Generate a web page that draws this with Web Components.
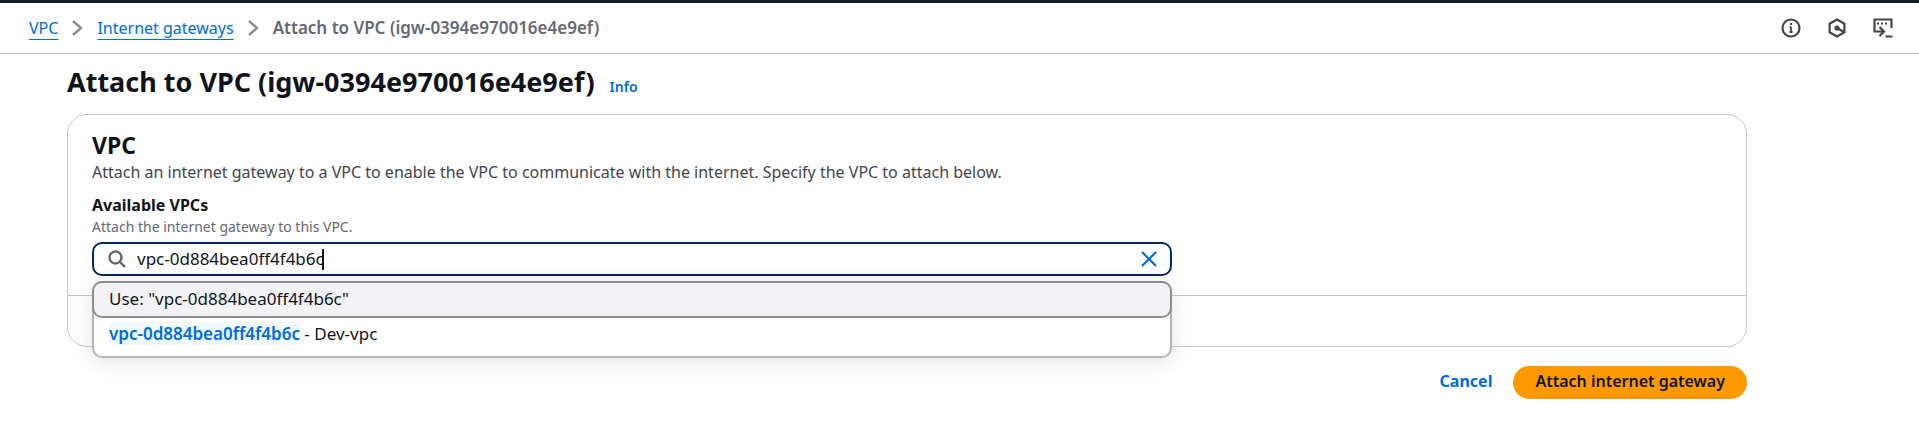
<!DOCTYPE html>
<html lang="en">
<head>
<meta charset="utf-8">
<meta name="viewport" content="width=device-width, initial-scale=1">
<title>Attach to VPC</title>
<style>
  :root {
    --link: #006ce0;
    --ink: #0f141a;
    --muted: #656871;
    --body: #424650;
    --line: #c6c6cd;
    --id-text: 17px;
    --small: 14px;
  }
  body {
    margin: 0;
    background: #fff;
    color: var(--ink);
    font: 16px/24px "Noto Sans", "Open Sans", sans-serif;
  }
</style>
</head>
<body>
<vpc-app></vpc-app>

<script>
const define = (name, html, setup) => {
  const template = document.createElement('template');
  template.innerHTML = html;
  customElements.define(name, class extends HTMLElement {
    constructor() {
      super();
      this.attachShadow({ mode: 'open' }).append(template.content.cloneNode(true));
    }
    connectedCallback() { if (setup) setup(this.shadowRoot, this); }
  });
};

define('crumb-trail', `
<style>
  :host { display: block; }
  ol { display: flex; align-items: center; gap: 14px; margin: 0; padding: 0; list-style: none; }
  li { display: flex; align-items: center; gap: 14px; }
  a { color: var(--link); text-decoration: underline; text-decoration-thickness: 1px; text-underline-offset: 5px; }
  b { color: var(--muted); font-size: var(--id-text); font-weight: 600; }
  svg { display: block; fill: none; stroke: #8c8c94; stroke-width: 2.4; }
</style>
<nav aria-label="Breadcrumbs"><ol>
  <li><a href="#vpc">VPC</a><svg width="11" height="16" viewBox="0 0 11 16"><path d="M1 1l8 7-8 7"/></svg></li>
  <li><a href="#gateways">Internet gateways</a><svg width="11" height="16" viewBox="0 0 11 16"><path d="M1 1l8 7-8 7"/></svg></li>
  <li><b aria-current="page">Attach to VPC (igw-0394e970016e4e9ef)</b></li>
</ol></nav>`);

define('panel-tools', `
<style>
  :host { display: flex; align-items: center; gap: 26px; }
  button { display: block; padding: 0; border: 0; background: none; }
  svg { display: block; fill: none; stroke: #424650; stroke-width: 2.2; }
  .solid { fill: #424650; stroke: none; }
</style>
<button aria-label="Information"><svg width="20" height="20" viewBox="0 0 20 20"><circle cx="10" cy="10" r="8.5"/><path d="M10 9v5M8.6 9H10M8.4 14h3.2" stroke-width="1.8"/><rect class="solid" x="9" y="5" width="2" height="2"/></svg></button>
<button aria-label="Resources"><svg width="20" height="20" viewBox="0 0 20 20"><path d="M10 1.5l7.4 4.2v8.6L10 18.5l-7.4-4.2V5.7z"/><circle class="solid" cx="10" cy="10" r="2.6"/><path d="M10 10l7 4"/></svg></button>
<button aria-label="CloudShell"><svg width="20" height="20" viewBox="0 0 20 20"><path d="M1.5 14.5V1.5h17V10M.5 13.5H11M6.5 9L11 13.5 6.5 18M12.5 18.5H19.5"/><path d="M4 5.5h2M8 5.5h2M12 5.5h2"/></svg></button>`);

define('top-bar', `
<style>
  :host { display: flex; align-items: center; justify-content: space-between; box-sizing: border-box;
    min-height: 54px; padding: 0 26px 1px 29px; border-top: 3px solid #161d26; border-bottom: 1px solid #b4b4bb; }
</style>
<slot></slot>`);

define('page-title', `
<style>
  :host { display: flex; align-items: baseline; gap: 15px; }
  h1 { margin: 0; font-size: 27px; line-height: 36px; font-weight: 700; }
  a { color: var(--link); font-size: var(--small); font-weight: 600; text-decoration: none; }
</style>
<h1><slot></slot></h1><a href="#info">Info</a>`);

define('vpc-picker', `
<style>
  :host { display: block; }
  label { display: block; font-weight: 700; line-height: 22px; }
  p { margin: 0; color: var(--muted); font-size: var(--small); line-height: 22px; }
  .anchor { position: relative; max-width: 1080px; margin-top: 4px; font-size: var(--id-text); }
  .field { display: flex; align-items: center; box-sizing: border-box; height: 34px; padding: 0 12px 0 14px;
    border: 2px solid #002b66; border-radius: 10px; background: #fff; }
  .field > svg { margin-right: 11px; }
  svg { display: block; fill: none; }
  input { field-sizing: content; min-width: 0; height: 24px; padding: 0; border: 0; outline: 0; background: none;
    color: inherit; font: inherit; line-height: 24px; }
  .caret { width: 2px; height: 21px; margin-left: -2px; background: var(--ink); }
  .field button { margin-left: auto; padding: 0; border: 0; background: none; }
  ul { position: absolute; z-index: 2; top: 39px; left: 0; right: 0; box-sizing: border-box; margin: 0; padding: 0;
    list-style: none; border: 2px solid #b4b4bb; border-radius: 10px; background: #fff;
    box-shadow: 0 4px 20px 1px rgba(0, 7, 22, .1); }
  li { box-sizing: border-box; height: 38px; padding: 4px 15px; }
  li[aria-selected=true] { height: 37px; margin: -2px -2px 0; border: 2px solid #8c8c94; border-radius: 10px; background: #f3f3f7; }
  mark { background: #f0fbff; color: var(--link); font-weight: 600; }
</style>
<label for="vpc">Available VPCs</label>
<p id="hint">Attach the internet gateway to this VPC.</p>
<div class="anchor">
  <div class="field">
    <svg width="18" height="18" viewBox="0 0 18 18" stroke="#656871" stroke-width="2.4"><circle cx="7.5" cy="7.5" r="6"/><path d="M12 12l5 5"/></svg>
    <input id="vpc" value="vpc-0d884bea0ff4f4b6c" aria-describedby="hint" autocomplete="off" spellcheck="false"><span class="caret"></span>
    <button aria-label="Clear"><svg width="18" height="18" viewBox="0 0 18 18" stroke="#006ce0" stroke-width="2.2"><path d="M2 2l14 14M16 2L2 16"/></svg></button>
  </div>
  <ul role="listbox" aria-label="Available VPCs">
    <li role="option" aria-selected="true">Use: "vpc-0d884bea0ff4f4b6c"</li>
    <li role="option" aria-selected="false"><mark>vpc-0d884bea0ff4f4b6c</mark> - Dev-vpc</li>
  </ul>
</div>`, root => {
  const input = root.querySelector('input');
  root.querySelector('.field button').addEventListener('click', () => { input.value = ''; input.focus(); });
});

define('form-card', `
<style>
  :host { display: block; border: 1px solid var(--line); border-radius: 20px; }
  header, .content { padding: 0 24px; }
  header { padding-top: 15px; }
  .content { padding-top: 10px; padding-bottom: 19px; }
  h2 { margin: 0; font-size: 23px; line-height: 30px; font-weight: 700; }
  p { margin: 0; color: var(--body); line-height: 24px; }
  footer { height: 50px; border-top: 1px solid var(--line); }
</style>
<header><h2>VPC</h2><p>Attach an internet gateway to a VPC to enable the VPC to communicate with the internet. Specify the VPC to attach below.</p></header>
<div class="content"><slot></slot></div>
<footer></footer>`);

define('form-actions', `
<style>
  :host { display: flex; justify-content: flex-end; align-items: baseline; gap: 21px; }
  button { height: 33px; padding: 0 22px 3px; border: 0; border-radius: 17px; background: #ff9900; color: var(--ink);
    font: inherit; font-weight: 600; }
  a { color: var(--link); font-weight: 700; text-decoration: none; }
</style>
<a href="#cancel">Cancel</a><button type="submit">Attach internet gateway</button>`);

define('vpc-app', `
<style>
  :host { display: block; }
  main { display: flex; flex-direction: column; padding: 10px 172px 0 67px; }
  form-card { margin-top: 14px; }
  form-actions { margin-top: 19px; }
</style>
<top-bar><crumb-trail></crumb-trail><panel-tools></panel-tools></top-bar>
<main>
  <page-title>Attach to VPC (igw-0394e970016e4e9ef)</page-title>
  <form-card><vpc-picker></vpc-picker></form-card>
  <form-actions></form-actions>
</main>`);
</script>
</body>
</html>
